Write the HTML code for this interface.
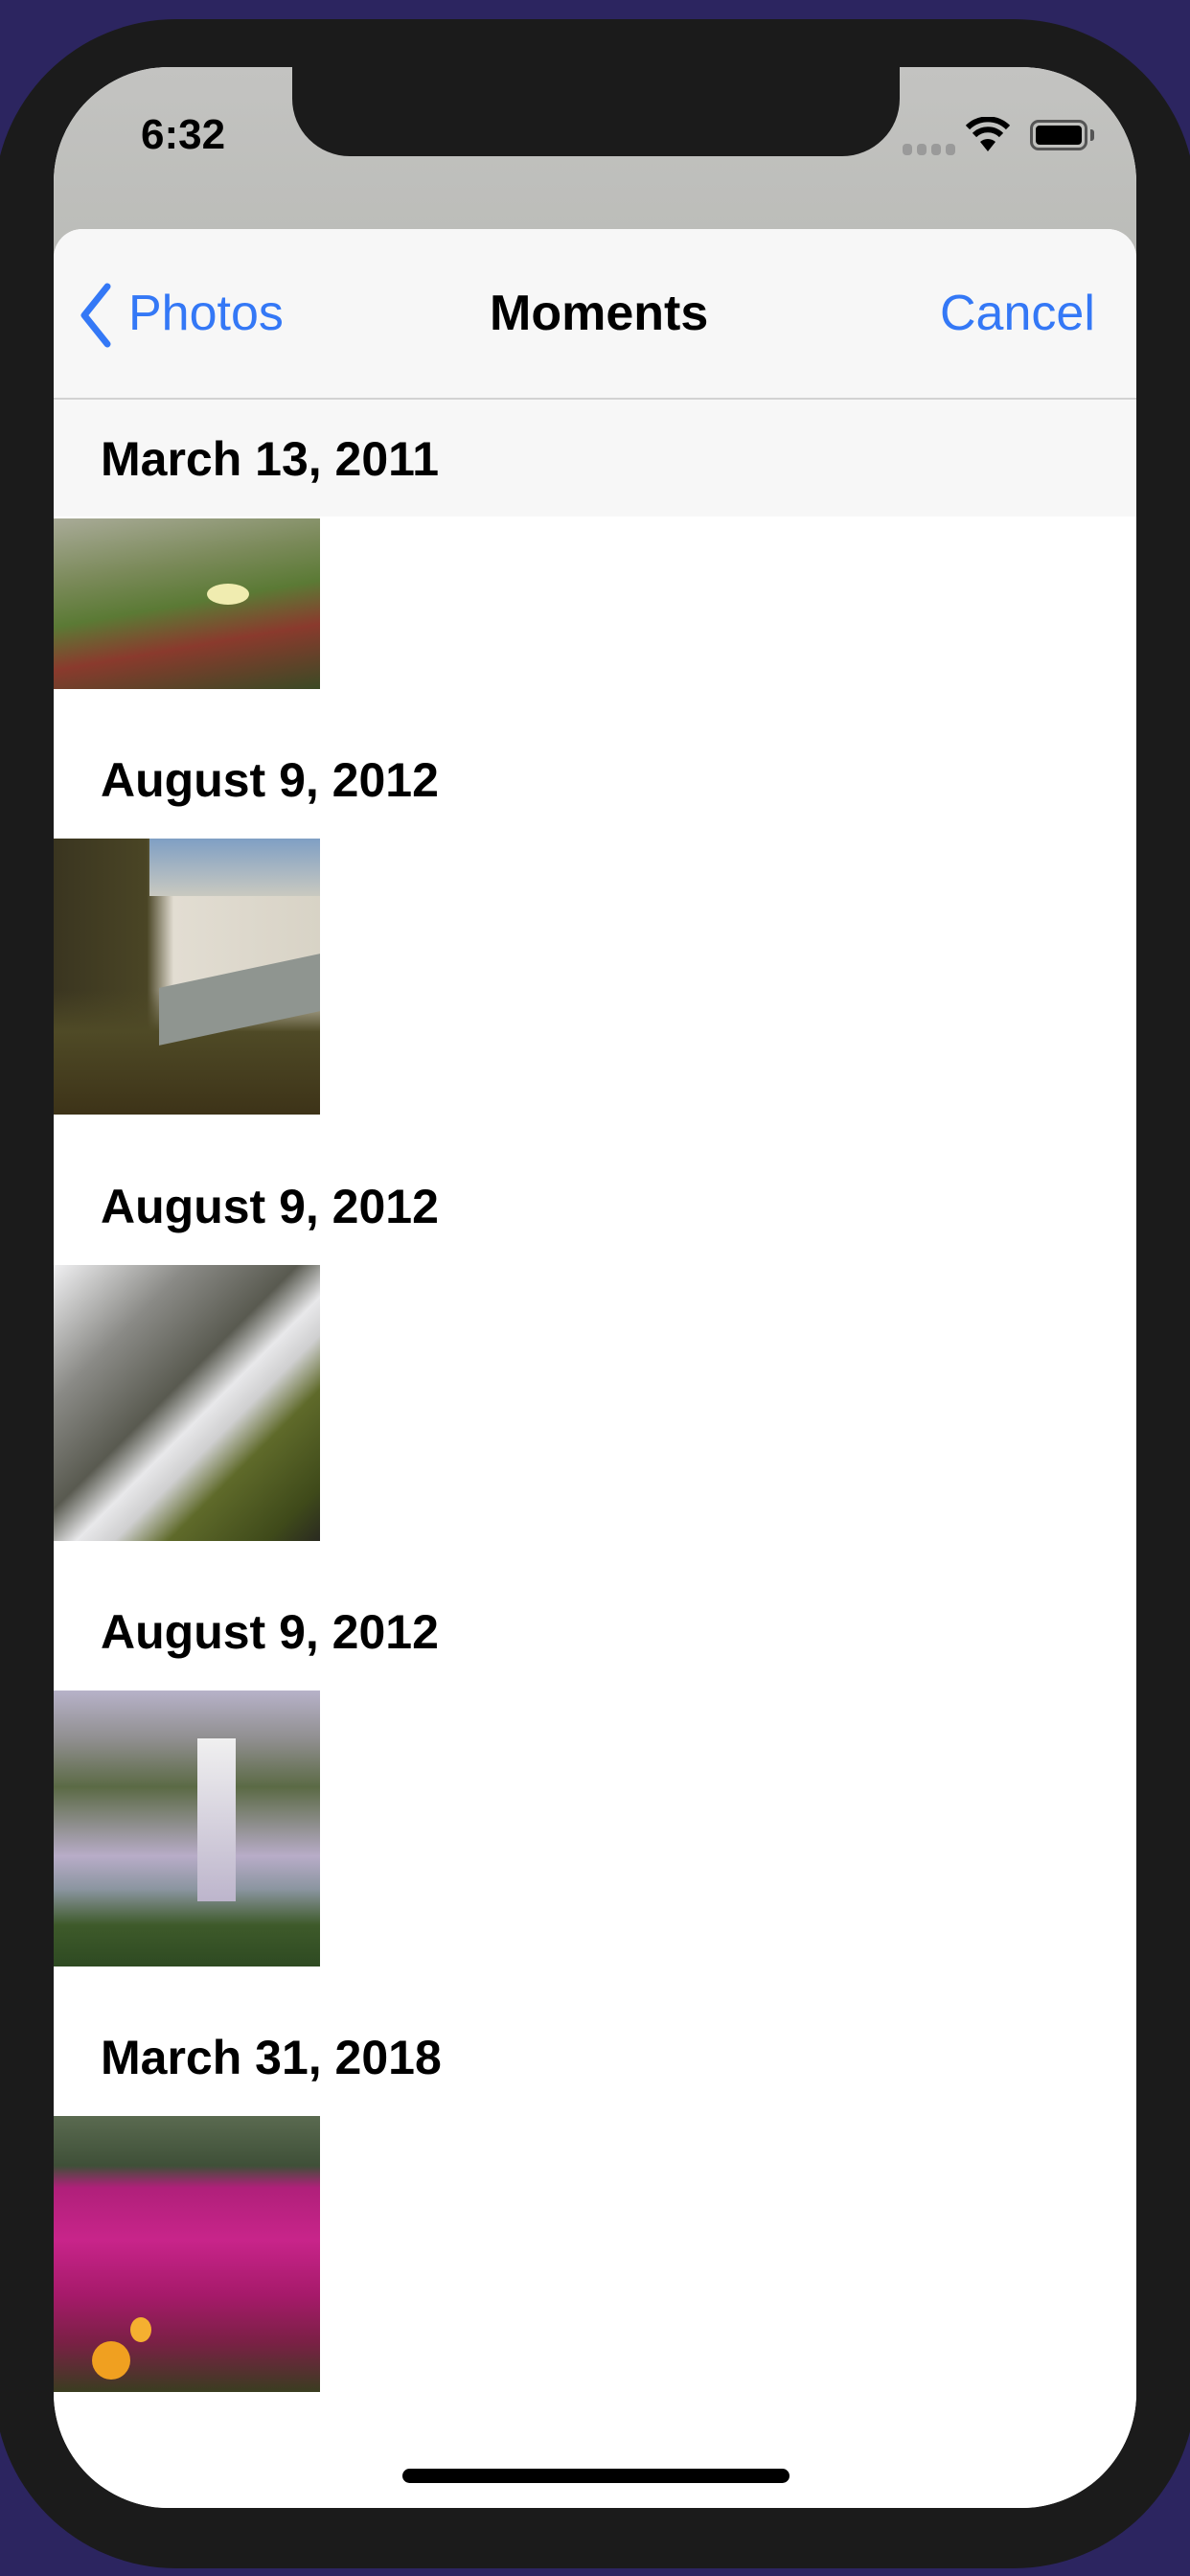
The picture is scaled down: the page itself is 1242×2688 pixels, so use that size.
<!DOCTYPE html>
<html><head><meta charset="utf-8"><style>
*{margin:0;padding:0;box-sizing:border-box}
html,body{width:1242px;height:2688px;overflow:hidden;background:#2c2560;font-family:"Liberation Sans",sans-serif}
.frame{position:absolute;left:-6px;top:20px;width:1254px;height:2660px;background:#1b1b1b;border-radius:190px}
.screen{position:absolute;left:56px;top:70px;width:1130px;height:2547px;background:#fff;border-radius:120px;overflow:hidden}
.status{position:absolute;left:0;top:0;width:1130px;height:200px;background:linear-gradient(180deg,#c3c3c1,#bbbcb8)}
.notch{position:absolute;left:249px;top:-10px;width:634px;height:103px;background:#1b1b1b;border-radius:0 0 60px 60px}
.sheet{position:absolute;left:0;top:169px;width:1130px;height:2400px;background:#fff;border-radius:30px 30px 0 0}
.nav{position:absolute;left:0;top:0;width:1130px;height:300px;background:#f7f7f7;border-radius:30px 30px 0 0}
.sep{position:absolute;left:0;top:176px;width:1130px;height:2px;background:#d2d2d2}
.t{position:absolute;line-height:1;white-space:nowrap}
.img{position:absolute;left:0;width:278px;height:288px}
.home{position:absolute;left:364px;top:2506px;width:404px;height:15px;border-radius:8px;background:#000}
</style></head><body>
<div class="frame"></div>
<div class="screen">
 <div class="status"></div>
 <div class="notch"></div>
 <div class="t" style="left:91px;top:49px;font-size:44px;font-weight:bold;color:#000">6:32</div>
 <svg style="position:absolute;left:886px;top:80px" width="56" height="12"><g fill="#9a9a9a"><rect x="0" y="0" width="10" height="12" rx="4"/><rect x="15" y="0" width="10" height="12" rx="4"/><rect x="30" y="0" width="10" height="12" rx="4"/><rect x="45" y="0" width="10" height="12" rx="4"/></g></svg>
 <svg style="position:absolute;left:952px;top:52px" width="46" height="36" viewBox="0 0 46 36"><path d="M23 36 L15 26 A12 12 0 0 1 31 26 Z" fill="#000"/><path d="M9 19 A20 20 0 0 1 37 19" stroke="#000" stroke-width="6" fill="none"/><path d="M2 11 A30 30 0 0 1 44 11" stroke="#000" stroke-width="6" fill="none"/></svg>
 <div style="position:absolute;left:1019px;top:55px;width:60px;height:32px;border:3px solid #555;border-radius:9px;padding:3px"><div style="width:100%;height:100%;background:#000;border-radius:4px"></div></div>
 <div style="position:absolute;left:1082px;top:65px;width:4px;height:12px;background:#555;border-radius:0 3px 3px 0"></div>

 <div class="sheet">
  <div class="img" style="top:302px;height:178px;background:linear-gradient(170deg,#a9ab98 0%,#7b8a5a 30%,#5b7a35 50%,#8a3a2d 70%,#3b4a25 100%)"><div style="position:absolute;left:160px;top:68px;width:44px;height:22px;border-radius:50%;background:#f0ecb0"></div></div>
  <div class="img" style="top:636px;background:linear-gradient(180deg,rgba(0,0,0,0) 0,rgba(0,0,0,0) 55%,#4f4a26 70%,#3d3318 100%),linear-gradient(90deg,#3a3520 0%,#4a4525 35%,#e2ddd2 45%,#d8d3c6 100%)"><div style="position:absolute;left:100px;top:0;width:178px;height:60px;background:linear-gradient(180deg,#7f9fc4,#c9c9c0)"></div><div style="position:absolute;left:110px;top:138px;width:168px;height:60px;background:#8f9590;transform:skewY(-12deg)"></div></div>
  <div class="img" style="top:1081px;background:linear-gradient(135deg,#f0f0f2 0%,#8a8a86 25%,#595a50 45%,#e8e8ea 55%,#cfcfd0 62%,#5f6a2a 72%,#3f4a1a 90%,#2a2a20 100%)"></div>
  <div class="img" style="top:1525px;background:linear-gradient(180deg,#b7b2c9 0%,#8f8e8e 18%,#5b6a45 35%,#b8acc8 60%,#8b95a0 72%,#3e5a2a 85%,#2e4a22 100%)"><div style="position:absolute;left:150px;top:50px;width:40px;height:170px;background:linear-gradient(180deg,#f0f0f0,#bdb5cc)"></div></div>
  <div class="img" style="top:1969px;background:linear-gradient(180deg,#5a6a50 0%,#3f5038 18%,#b0207a 26%,#c8248a 45%,#a61a6a 65%,#7a2045 82%,#3a3d20 100%)"><div style="position:absolute;left:40px;top:235px;width:40px;height:40px;border-radius:50%;background:#f0a020"></div><div style="position:absolute;left:80px;top:210px;width:22px;height:26px;border-radius:50%;background:#f5b030"></div></div>

  <div class="t" style="left:49px;top:550px;font-size:50px;font-weight:bold;color:#000">August 9, 2012</div>
  <div class="t" style="left:49px;top:995px;font-size:50px;font-weight:bold;color:#000">August 9, 2012</div>
  <div class="t" style="left:49px;top:1439px;font-size:50px;font-weight:bold;color:#000">August 9, 2012</div>
  <div class="t" style="left:49px;top:1883px;font-size:50px;font-weight:bold;color:#000">March 31, 2018</div>

  <div class="nav"></div>
  <div class="sep"></div>
  <svg style="position:absolute;left:24px;top:56px" width="40" height="68" viewBox="0 0 40 68"><path d="M32 4 L8 34 L32 64" stroke="#3478f6" stroke-width="7" fill="none" stroke-linecap="round" stroke-linejoin="round"/></svg>
  <div class="t" style="left:78px;top:62px;font-size:52px;color:#3478f6">Photos</div>
  <div class="t" style="left:455px;top:62px;font-size:52px;font-weight:bold;color:#000">Moments</div>
  <div class="t" style="left:925px;top:62px;font-size:52px;color:#3478f6">Cancel</div>
  <div class="t" style="left:49px;top:215px;font-size:50px;font-weight:bold;color:#000">March 13, 2011</div>
 </div>
 <div class="home"></div>
</div>
</body></html>
